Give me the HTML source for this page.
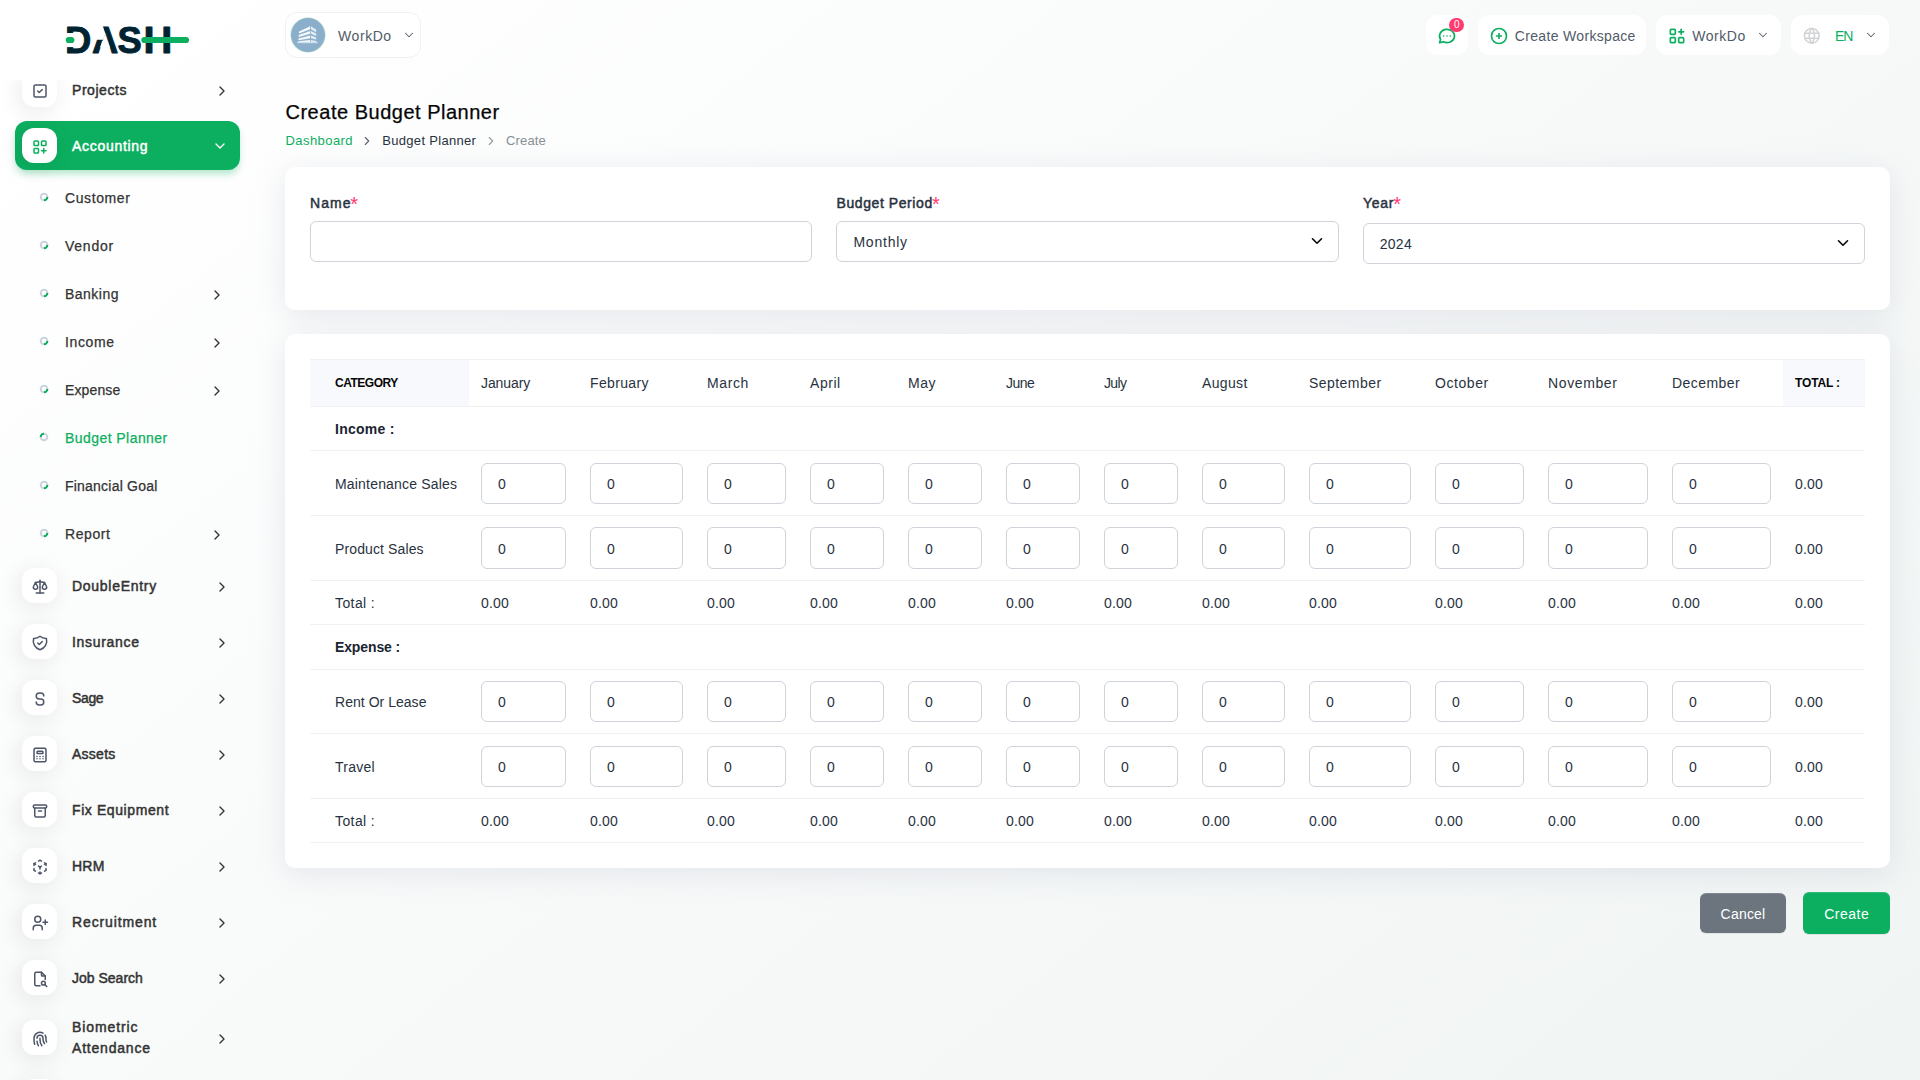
<!DOCTYPE html>
<html lang="en"><head><meta charset="utf-8"><meta name="viewport" content="width=1920"><title>Create Budget Planner</title>
<style>
*{box-sizing:border-box;margin:0;padding:0}
html,body{width:1920px;height:1080px;overflow:hidden}
body{position:relative;font-family:"Liberation Sans",sans-serif;font-size:14px;color:#293240;background:#fff linear-gradient(141.55deg,rgba(240,244,243,0) 3.46%,#f0f4f3 99.86%);}
.t{position:absolute;white-space:nowrap;display:block}
.abs{position:absolute}
svg.ic{position:absolute;display:block;overflow:visible}
/* sidebar */
#nav{position:absolute;left:0;top:80px;width:280px;height:1000px;overflow:hidden}
.mi{position:absolute;left:22px;width:35px;height:35px;border-radius:12px;background:#fff;box-shadow:-3px 4px 23px rgba(0,0,0,.09)}
.mi svg.ic{left:8.6px;top:9.6px}
.act{position:absolute;left:15px;top:41px;width:225px;height:49px;border-radius:12px;background:#0caf60;box-shadow:0 5px 7px -1px rgba(12,175,96,.3)}
.dot{position:absolute;left:39px;width:10px;height:10px}
/* header */
.hb{position:absolute;top:15px;height:40px;border-radius:12px;background:#fff}
/* cards */
.card{position:absolute;left:285px;width:1605px;background:#fff;border-radius:10px;box-shadow:0 6px 30px rgba(182,186,203,.3)}
.inp{position:absolute;height:41px;border:1px solid #ced4da;border-radius:6px;background:#fff}
.btn{position:absolute;border-radius:6px;box-shadow:inset 0 1px 0 rgba(255,255,255,.15),0 1px 1px rgba(0,0,0,.075)}
/* table */
table{position:absolute;left:25px;top:25px;width:1555px;border-collapse:collapse;table-layout:fixed}
th,td{text-align:left;vertical-align:middle;padding:0 12px;border-bottom:1px solid #f1f1f1;font-size:14px;font-weight:400;color:#293240;white-space:nowrap;position:relative}
thead th{height:47px;border-top:1px solid #f1f1f1}
th.hd{background:#f8f9fd;font-size:12px;font-weight:700;color:#060606;text-transform:uppercase}
td:first-child,th:first-child{padding-left:25px}
tr.sec td{font-weight:700;color:#1b2431}
tr.row td{vertical-align:top}
.rl{display:block;position:relative;top:1px}
tr.tot td{height:44px}
.ci{display:block;height:41px;width:100%;border:1px solid #ced4da;border-radius:6px;background:#fff;padding:0 0 0 16px;font-size:14px;color:#293240}

</style></head>
<body>
<div class="abs" id="logo" style="left:60px;top:20px;width:140px;height:40px"><svg width="140" height="40" viewBox="60 20 140 40" style="position:absolute;left:0;top:0;overflow:visible"><text y="52.6" font-family="Liberation Sans, sans-serif" font-weight="700" font-size="36.4" fill="#002332" stroke="#002332" stroke-width="0.9" stroke-linejoin="round"><tspan x="64.9">D</tspan><tspan x="92">A</tspan><tspan x="117.6">S</tspan><tspan x="143.6" textLength="28.8" lengthAdjust="spacingAndGlyphs">H</tspan></text><rect x="60" y="33" width="14.3" height="14.1" fill="#fff"/><path d="M95 26h7.85l2.5 7.8l-2.15 6h-8.2z" fill="#fff"/><path d="M102.1 41h5.9l2.1 6.5h-10.1z" fill="#fff"/><rect x="65.7" y="36.9" width="8.7" height="6.2" rx="3.1" fill="#0caf60"/><rect x="141.3" y="36.9" width="47.8" height="6.2" rx="3.1" fill="#0caf60"/></svg></div>
<div id="nav">
<div class="mi" style="top:-8.0px"><svg class="ic" width="18" height="18" viewBox="0 0 24 24" fill="none" stroke="#4d5567" stroke-width="2" stroke-linecap="round" stroke-linejoin="round" style=""><rect x="4" y="4" width="16" height="16" rx="2"/><path d="M9 12l2 2l4 -4"/></svg></div><span class="t" style="left:72px;top:0.05px;font-size:14px;font-weight:400;color:#333333;line-height:20px;letter-spacing:0.556px;-webkit-text-stroke:0.48px;">Projects</span><svg class="ic" width="16" height="16" viewBox="0 0 24 24" fill="none" stroke="#333333" stroke-width="2" stroke-linecap="round" stroke-linejoin="round" style="left:213.5px;top:3.0px"><polyline points="9 18 15 12 9 6"/></svg>
<div class="act" style="top:41.0px"></div><div class="mi" style="top:48.0px"><svg class="ic" width="18" height="18" viewBox="0 0 24 24" fill="none" stroke="#0caf60" stroke-width="2" stroke-linecap="round" stroke-linejoin="round" style=""><rect x="4" y="4" width="6" height="6" rx="1"/><rect x="14" y="4" width="6" height="6" rx="1"/><rect x="4" y="14" width="6" height="6" rx="1"/><path d="M14 17h6m-3 -3v6"/></svg></div><span class="t" style="left:72px;top:56.05px;font-size:14px;font-weight:400;color:#fff;line-height:20px;letter-spacing:0.701px;-webkit-text-stroke:0.48px;">Accounting</span><svg class="ic" width="16" height="16" viewBox="0 0 24 24" fill="none" stroke="#fff" stroke-width="2" stroke-linecap="round" stroke-linejoin="round" style="left:212px;top:57.5px"><polyline points="6 9 12 15 18 9"/></svg>
<svg class="dot" style="top:111.9px" viewBox="0 0 10 10"><circle cx="5" cy="5" r="3.3" fill="none" stroke="#cdd3dd" stroke-width="2"/><path d="M8.3 5a3.3 3.3 0 0 1 -3.3 3.3" fill="none" stroke="#0caf60" stroke-width="2"/></svg><span class="t" style="left:65px;top:108.45px;font-size:14px;font-weight:400;color:#333333;line-height:20px;letter-spacing:0.600px;-webkit-text-stroke:0.25px;">Customer</span>
<svg class="dot" style="top:159.9px" viewBox="0 0 10 10"><circle cx="5" cy="5" r="3.3" fill="none" stroke="#cdd3dd" stroke-width="2"/><path d="M8.3 5a3.3 3.3 0 0 1 -3.3 3.3" fill="none" stroke="#0caf60" stroke-width="2"/></svg><span class="t" style="left:65px;top:156.45px;font-size:14px;font-weight:400;color:#333333;line-height:20px;letter-spacing:0.747px;-webkit-text-stroke:0.25px;">Vendor</span>
<svg class="dot" style="top:207.9px" viewBox="0 0 10 10"><circle cx="5" cy="5" r="3.3" fill="none" stroke="#cdd3dd" stroke-width="2"/><path d="M8.3 5a3.3 3.3 0 0 1 -3.3 3.3" fill="none" stroke="#0caf60" stroke-width="2"/></svg><span class="t" style="left:65px;top:204.45px;font-size:14px;font-weight:400;color:#333333;line-height:20px;letter-spacing:0.473px;-webkit-text-stroke:0.25px;">Banking</span><svg class="ic" width="16" height="16" viewBox="0 0 24 24" fill="none" stroke="#333333" stroke-width="2" stroke-linecap="round" stroke-linejoin="round" style="left:209px;top:206.8px"><polyline points="9 18 15 12 9 6"/></svg>
<svg class="dot" style="top:255.9px" viewBox="0 0 10 10"><circle cx="5" cy="5" r="3.3" fill="none" stroke="#cdd3dd" stroke-width="2"/><path d="M8.3 5a3.3 3.3 0 0 1 -3.3 3.3" fill="none" stroke="#0caf60" stroke-width="2"/></svg><span class="t" style="left:65px;top:252.45px;font-size:14px;font-weight:400;color:#333333;line-height:20px;letter-spacing:0.637px;-webkit-text-stroke:0.25px;">Income</span><svg class="ic" width="16" height="16" viewBox="0 0 24 24" fill="none" stroke="#333333" stroke-width="2" stroke-linecap="round" stroke-linejoin="round" style="left:209px;top:254.8px"><polyline points="9 18 15 12 9 6"/></svg>
<svg class="dot" style="top:303.9px" viewBox="0 0 10 10"><circle cx="5" cy="5" r="3.3" fill="none" stroke="#cdd3dd" stroke-width="2"/><path d="M8.3 5a3.3 3.3 0 0 1 -3.3 3.3" fill="none" stroke="#0caf60" stroke-width="2"/></svg><span class="t" style="left:65px;top:300.45px;font-size:14px;font-weight:400;color:#333333;line-height:20px;letter-spacing:0.124px;-webkit-text-stroke:0.25px;">Expense</span><svg class="ic" width="16" height="16" viewBox="0 0 24 24" fill="none" stroke="#333333" stroke-width="2" stroke-linecap="round" stroke-linejoin="round" style="left:209px;top:302.8px"><polyline points="9 18 15 12 9 6"/></svg>
<svg class="dot" style="top:351.9px" viewBox="0 0 10 10"><circle cx="5" cy="5" r="3.3" fill="none" stroke="#cdd3dd" stroke-width="2"/><path d="M1.7 5a3.3 3.3 0 0 1 3.3 -3.3" fill="none" stroke="#0caf60" stroke-width="2"/></svg><span class="t" style="left:65px;top:348.45px;font-size:14px;font-weight:400;color:#0caf60;line-height:20px;letter-spacing:0.438px;-webkit-text-stroke:0.25px;">Budget Planner</span>
<svg class="dot" style="top:399.9px" viewBox="0 0 10 10"><circle cx="5" cy="5" r="3.3" fill="none" stroke="#cdd3dd" stroke-width="2"/><path d="M8.3 5a3.3 3.3 0 0 1 -3.3 3.3" fill="none" stroke="#0caf60" stroke-width="2"/></svg><span class="t" style="left:65px;top:396.45px;font-size:14px;font-weight:400;color:#333333;line-height:20px;letter-spacing:0.216px;-webkit-text-stroke:0.25px;">Financial Goal</span>
<svg class="dot" style="top:447.9px" viewBox="0 0 10 10"><circle cx="5" cy="5" r="3.3" fill="none" stroke="#cdd3dd" stroke-width="2"/><path d="M8.3 5a3.3 3.3 0 0 1 -3.3 3.3" fill="none" stroke="#0caf60" stroke-width="2"/></svg><span class="t" style="left:65px;top:444.45px;font-size:14px;font-weight:400;color:#333333;line-height:20px;letter-spacing:0.567px;-webkit-text-stroke:0.25px;">Report</span><svg class="ic" width="16" height="16" viewBox="0 0 24 24" fill="none" stroke="#333333" stroke-width="2" stroke-linecap="round" stroke-linejoin="round" style="left:209px;top:446.8px"><polyline points="9 18 15 12 9 6"/></svg>
<div class="mi" style="top:488.0px"><svg class="ic" width="18" height="18" viewBox="0 0 24 24" fill="none" stroke="#4d5567" stroke-width="2" stroke-linecap="round" stroke-linejoin="round" style=""><path d="M7 20h10"/><path d="M6 6l6 -1l6 1"/><path d="M12 3v17"/><path d="M9 12l-3 -6l-3 6a3 3 0 0 0 6 0"/><path d="M21 12l-3 -6l-3 6a3 3 0 0 0 6 0"/></svg></div><span class="t" style="left:72px;top:496.05px;font-size:14px;font-weight:400;color:#333333;line-height:20px;letter-spacing:0.713px;-webkit-text-stroke:0.48px;">DoubleEntry</span><svg class="ic" width="16" height="16" viewBox="0 0 24 24" fill="none" stroke="#333333" stroke-width="2" stroke-linecap="round" stroke-linejoin="round" style="left:213.5px;top:499.0px"><polyline points="9 18 15 12 9 6"/></svg>
<div class="mi" style="top:544.0px"><svg class="ic" width="18" height="18" viewBox="0 0 24 24" fill="none" stroke="#4d5567" stroke-width="2" stroke-linecap="round" stroke-linejoin="round" style=""><path d="M9 12l2 2l4 -4"/><path d="M12 3a12 12 0 0 0 8.5 3a12 12 0 0 1 -8.5 15a12 12 0 0 1 -8.5 -15a12 12 0 0 0 8.5 -3"/></svg></div><span class="t" style="left:72px;top:552.05px;font-size:14px;font-weight:400;color:#333333;line-height:20px;letter-spacing:0.684px;-webkit-text-stroke:0.48px;">Insurance</span><svg class="ic" width="16" height="16" viewBox="0 0 24 24" fill="none" stroke="#333333" stroke-width="2" stroke-linecap="round" stroke-linejoin="round" style="left:213.5px;top:555.0px"><polyline points="9 18 15 12 9 6"/></svg>
<div class="mi" style="top:600.0px"><svg class="ic" width="18" height="18" viewBox="0 0 24 24" fill="none" stroke="#4d5567" stroke-width="2" stroke-linecap="round" stroke-linejoin="round" style=""><path d="M17 8a4 4 0 0 0 -4 -4h-2a4 4 0 0 0 0 8h2a4 4 0 0 1 0 8h-2a4 4 0 0 1 -4 -4"/></svg></div><span class="t" style="left:72px;top:608.05px;font-size:14px;font-weight:400;color:#333333;line-height:20px;letter-spacing:-0.349px;-webkit-text-stroke:0.48px;">Sage</span><svg class="ic" width="16" height="16" viewBox="0 0 24 24" fill="none" stroke="#333333" stroke-width="2" stroke-linecap="round" stroke-linejoin="round" style="left:213.5px;top:611.0px"><polyline points="9 18 15 12 9 6"/></svg>
<div class="mi" style="top:656.0px"><svg class="ic" width="18" height="18" viewBox="0 0 24 24" fill="none" stroke="#4d5567" stroke-width="2" stroke-linecap="round" stroke-linejoin="round" style=""><rect x="4" y="3" width="16" height="18" rx="2"/><rect x="8" y="7" width="8" height="3" rx="1"/><path d="M8 14v.01M12 14v.01M16 14v.01M8 17v.01M12 17v.01M16 17v.01"/></svg></div><span class="t" style="left:72px;top:664.05px;font-size:14px;font-weight:400;color:#333333;line-height:20px;letter-spacing:0.259px;-webkit-text-stroke:0.48px;">Assets</span><svg class="ic" width="16" height="16" viewBox="0 0 24 24" fill="none" stroke="#333333" stroke-width="2" stroke-linecap="round" stroke-linejoin="round" style="left:213.5px;top:667.0px"><polyline points="9 18 15 12 9 6"/></svg>
<div class="mi" style="top:712.0px"><svg class="ic" width="18" height="18" viewBox="0 0 24 24" fill="none" stroke="#4d5567" stroke-width="2" stroke-linecap="round" stroke-linejoin="round" style=""><rect x="3" y="4" width="18" height="4" rx="2"/><path d="M5 8v10a2 2 0 0 0 2 2h10a2 2 0 0 0 2 -2v-10"/><path d="M10 12h4"/></svg></div><span class="t" style="left:72px;top:720.05px;font-size:14px;font-weight:400;color:#333333;line-height:20px;letter-spacing:0.594px;-webkit-text-stroke:0.48px;">Fix Equipment</span><svg class="ic" width="16" height="16" viewBox="0 0 24 24" fill="none" stroke="#333333" stroke-width="2" stroke-linecap="round" stroke-linejoin="round" style="left:213.5px;top:723.0px"><polyline points="9 18 15 12 9 6"/></svg>
<div class="mi" style="top:768.0px"><svg class="ic" width="18" height="18" viewBox="0 0 24 24" fill="none" stroke="#4d5567" stroke-width="2" stroke-linecap="round" stroke-linejoin="round" style=""><path d="M6 17.6l-2 -1.1v-2.5"/><path d="M4 10v-2.5l2 -1.1"/><path d="M10 4.1l2 -1.1l2 1.1"/><path d="M18 6.4l2 1.1v2.5"/><path d="M20 14v2.5l-2 1.12"/><path d="M14 19.9l-2 1.1l-2 -1.1"/><path d="M12 12l2 -1.1"/><path d="M18 8.6l2 -1.1"/><path d="M12 12v2.5"/><path d="M12 18.5v2.5"/><path d="M12 12l-2 -1.12"/><path d="M6 8.6l-2 -1.1"/></svg></div><span class="t" style="left:72px;top:776.05px;font-size:14px;font-weight:400;color:#333333;line-height:20px;letter-spacing:0.242px;-webkit-text-stroke:0.48px;">HRM</span><svg class="ic" width="16" height="16" viewBox="0 0 24 24" fill="none" stroke="#333333" stroke-width="2" stroke-linecap="round" stroke-linejoin="round" style="left:213.5px;top:779.0px"><polyline points="9 18 15 12 9 6"/></svg>
<div class="mi" style="top:824.0px"><svg class="ic" width="18" height="18" viewBox="0 0 24 24" fill="none" stroke="#4d5567" stroke-width="2" stroke-linecap="round" stroke-linejoin="round" style=""><circle cx="9" cy="7" r="4"/><path d="M3 21v-2a4 4 0 0 1 4 -4h4a4 4 0 0 1 4 4v2"/><path d="M16 11h6m-3 -3v6"/></svg></div><span class="t" style="left:72px;top:832.05px;font-size:14px;font-weight:400;color:#333333;line-height:20px;letter-spacing:0.873px;-webkit-text-stroke:0.48px;">Recruitment</span><svg class="ic" width="16" height="16" viewBox="0 0 24 24" fill="none" stroke="#333333" stroke-width="2" stroke-linecap="round" stroke-linejoin="round" style="left:213.5px;top:835.0px"><polyline points="9 18 15 12 9 6"/></svg>
<div class="mi" style="top:880.0px"><svg class="ic" width="18" height="18" viewBox="0 0 24 24" fill="none" stroke="#4d5567" stroke-width="2" stroke-linecap="round" stroke-linejoin="round" style=""><path d="M14 3v4a1 1 0 0 0 1 1h4"/><path d="M12 21h-5a2 2 0 0 1 -2 -2v-14a2 2 0 0 1 2 -2h7l5 5v4.5"/><circle cx="16.5" cy="17.5" r="2.5"/><path d="M18.5 19.5l2.5 2.5"/></svg></div><span class="t" style="left:72px;top:888.05px;font-size:14px;font-weight:400;color:#333333;line-height:20px;letter-spacing:0.005px;-webkit-text-stroke:0.48px;">Job Search</span><svg class="ic" width="16" height="16" viewBox="0 0 24 24" fill="none" stroke="#333333" stroke-width="2" stroke-linecap="round" stroke-linejoin="round" style="left:213.5px;top:891.0px"><polyline points="9 18 15 12 9 6"/></svg>
<div class="mi" style="top:940.0px"><svg class="ic" width="18" height="18" viewBox="0 0 24 24" fill="none" stroke="#4d5567" stroke-width="2" stroke-linecap="round" stroke-linejoin="round" style=""><path d="M18.9 7a8 8 0 0 1 1.1 5v1a6 6 0 0 0 .8 3"/><path d="M8 11a4 4 0 0 1 8 0v1a10 10 0 0 0 2 6"/><path d="M12 11v2a14 14 0 0 0 2.5 8"/><path d="M8 15a18 18 0 0 0 1.8 6"/><path d="M4.9 19a22 22 0 0 1 -.9 -7v-1a8 8 0 0 1 12 -6.95"/></svg></div><span class="t" style="left:72px;top:937.05px;font-size:14px;font-weight:400;color:#333333;line-height:20px;letter-spacing:0.898px;-webkit-text-stroke:0.48px;">Biometric</span><span class="t" style="left:72px;top:957.95px;font-size:14px;font-weight:400;color:#333333;line-height:20px;letter-spacing:0.800px;-webkit-text-stroke:0.48px;">Attendance</span><svg class="ic" width="16" height="16" viewBox="0 0 24 24" fill="none" stroke="#333333" stroke-width="2" stroke-linecap="round" stroke-linejoin="round" style="left:213.5px;top:951.0px"><polyline points="9 18 15 12 9 6"/></svg>
<div class="mi" style="top:999.0px"></div>
</div><div class="abs" style="left:285px;top:12px;width:136px;height:46px;border:1px solid #f1f1f1;border-radius:12px;background:#fff"></div>
<div class="abs" style="left:291px;top:18px;width:34px;height:34px;border-radius:50%;background:#8bafcb;box-shadow:0 0 0 .7px #cdeedb"></div>
<svg class="ic" style="left:290px;top:17px" width="36" height="36" viewBox="290 17 36 36"><g fill="#f4f8fb"><path d="M299 31.5L310.2 26.3V29.2L299 33.6z"/><path d="M298.7 35L310.2 31V33.7L298.7 37.1z"/><path d="M298.5 38.4L310.2 35.5V38.2L298.5 40.3z"/><path d="M298.3 41.3L310.2 39.9V42L298.3 42.3z"/></g><g fill="#e3edf5"><path d="M311 26.4L316.2 29.5V32.2L311 29.3z"/><path d="M311 31L316.2 33.6V36L311 33.7z"/><path d="M311 35.5L316.2 37.4V39.6L311 38.2z"/><path d="M311 39.9L316.2 41V42.3L311 42z"/></g><rect x="297.2" y="41.9" width="20.4" height="1.3" fill="#cfdfeb"/></svg>
<span class="t" style="left:338.1px;top:25.85px;font-size:14px;font-weight:400;color:#525b69;line-height:20px;letter-spacing:0.541px;">WorkDo</span>
<svg class="ic" width="14" height="14" viewBox="0 0 24 24" fill="none" stroke="#5b6270" stroke-width="1.8" stroke-linecap="round" stroke-linejoin="round" style="left:401.9px;top:27.7px"><polyline points="6 9 12 15 18 9"/></svg>
<div class="hb" style="left:1426px;width:42px"></div>
<svg class="ic" width="20" height="20" viewBox="0 0 24 24" fill="none" stroke="#0caf60" stroke-width="2" stroke-linecap="round" stroke-linejoin="round" style="left:1437.2px;top:25.8px"><path d="M3 20l1.3 -3.9a9 8 0 1 1 3.4 2.9l-4.7 1"/><path d="M12 12v.01M8 12v.01M16 12v.01"/></svg>
<div class="abs" style="left:1449px;top:17.5px;width:15px;height:14.5px;border-radius:8px;background:#ff3a6e"></div>
<span class="t" style="left:1453.9px;top:18.54px;font-size:10px;font-weight:400;color:#fff;line-height:12px;letter-spacing:0.156px;">0</span>
<div class="hb" style="left:1478px;width:168px"></div>
<svg class="ic" width="20" height="20" viewBox="0 0 24 24" fill="none" stroke="#0caf60" stroke-width="2" stroke-linecap="round" stroke-linejoin="round" style="left:1489.3px;top:25.9px"><circle cx="12" cy="12" r="9"/><path d="M9 12h6"/><path d="M12 9v6"/></svg>
<span class="t" style="left:1514.8px;top:25.85px;font-size:14px;font-weight:400;color:#525b69;line-height:20px;letter-spacing:0.327px;">Create Workspace</span>
<div class="hb" style="left:1656px;width:125px"></div>
<svg class="ic" width="20" height="20" viewBox="0 0 24 24" fill="none" stroke="#0caf60" stroke-width="2" stroke-linecap="round" stroke-linejoin="round" style="left:1667.2px;top:25.9px"><rect x="4" y="4" width="6" height="6" rx="1"/><rect x="4" y="14" width="6" height="6" rx="1"/><rect x="14" y="14" width="6" height="6" rx="1"/><path d="M14 7h6"/><path d="M17 4v6"/></svg>
<span class="t" style="left:1692.2px;top:25.85px;font-size:14px;font-weight:400;color:#525b69;line-height:20px;letter-spacing:0.541px;">WorkDo</span>
<svg class="ic" width="14" height="14" viewBox="0 0 24 24" fill="none" stroke="#5b6270" stroke-width="1.8" stroke-linecap="round" stroke-linejoin="round" style="left:1756px;top:27.9px"><polyline points="6 9 12 15 18 9"/></svg>
<div class="hb" style="left:1791px;width:98px"></div>
<svg class="ic" width="19.6" height="19.6" viewBox="0 0 24 24" fill="none" stroke="#d2d4d7" stroke-width="1.9" stroke-linecap="round" stroke-linejoin="round" style="left:1802.4px;top:25.9px"><circle cx="12" cy="12" r="9"/><path d="M3.6 9h16.8"/><path d="M3.6 15h16.8"/><path d="M11.5 3a17 17 0 0 0 0 18"/><path d="M12.5 3a17 17 0 0 1 0 18"/></svg>
<span class="t" style="left:1835px;top:25.85px;font-size:14px;font-weight:400;color:#0caf60;line-height:20px;letter-spacing:-1.125px;">EN</span>
<svg class="ic" width="14" height="14" viewBox="0 0 24 24" fill="none" stroke="#5b6270" stroke-width="1.8" stroke-linecap="round" stroke-linejoin="round" style="left:1863.8px;top:27.9px"><polyline points="6 9 12 15 18 9"/></svg><span class="t" style="left:285.5px;top:98.57px;font-size:20px;font-weight:400;color:#060606;line-height:26px;letter-spacing:0.509px;-webkit-text-stroke:0.25px;">Create Budget Planner</span>
<span class="t" style="left:285.5px;top:130.60px;font-size:13px;font-weight:400;color:#0caf60;line-height:20px;letter-spacing:0.436px;">Dashboard</span>
<svg class="ic" width="14" height="14" viewBox="0 0 24 24" fill="none" stroke="#5d646c" stroke-width="1.9" stroke-linecap="round" stroke-linejoin="round" style="left:360.4px;top:133.5px"><polyline points="9 18 15 12 9 6"/></svg>
<span class="t" style="left:382.3px;top:130.60px;font-size:13px;font-weight:400;color:#293240;line-height:20px;letter-spacing:0.304px;">Budget Planner</span>
<svg class="ic" width="14" height="14" viewBox="0 0 24 24" fill="none" stroke="#959ba2" stroke-width="1.9" stroke-linecap="round" stroke-linejoin="round" style="left:484.2px;top:133.5px"><polyline points="9 18 15 12 9 6"/></svg>
<span class="t" style="left:505.9px;top:130.60px;font-size:13px;font-weight:400;color:#868e96;line-height:20px;letter-spacing:0.188px;">Create</span>
<div class="card" style="top:167px;height:143px"></div>
<span class="t" style="left:310px;top:193.45px;font-size:14px;font-weight:400;color:#293240;line-height:20px;letter-spacing:1.052px;-webkit-text-stroke:0.48px;">Name</span>
<span class="t" style="left:350.3px;top:192.47px;font-size:20px;font-weight:400;color:#ff3a6e;line-height:24px;letter-spacing:3.219px;">*</span>
<span class="t" style="left:836.5px;top:193.45px;font-size:14px;font-weight:400;color:#293240;line-height:20px;letter-spacing:0.582px;-webkit-text-stroke:0.48px;">Budget Period</span>
<span class="t" style="left:931.9px;top:192.47px;font-size:20px;font-weight:400;color:#ff3a6e;line-height:24px;letter-spacing:3.219px;">*</span>
<span class="t" style="left:1363px;top:193.45px;font-size:14px;font-weight:400;color:#293240;line-height:20px;letter-spacing:0.740px;-webkit-text-stroke:0.48px;">Year</span>
<span class="t" style="left:1393.3px;top:192.47px;font-size:20px;font-weight:400;color:#ff3a6e;line-height:24px;letter-spacing:3.219px;">*</span>
<div class="inp" style="left:310px;top:221px;width:502px"></div>
<div class="inp" style="left:836px;top:221px;width:503px"></div>
<div class="inp" style="left:1363px;top:223px;width:502px"></div>
<span class="t" style="left:853.4px;top:232.15px;font-size:14px;font-weight:400;color:#293240;line-height:20px;letter-spacing:0.784px;">Monthly</span>
<span class="t" style="left:1379.7px;top:234.15px;font-size:14px;font-weight:400;color:#293240;line-height:20px;letter-spacing:0.292px;">2024</span>
<svg class="ic" style="left:1309px;top:235.2px" width="16" height="12" viewBox="0 0 16 16" preserveAspectRatio="xMidYMid meet"><path fill="none" stroke="#05070a" stroke-linecap="round" stroke-linejoin="round" stroke-width="2.15" d="M2 5l6 6 6-6"/></svg>
<svg class="ic" style="left:1835px;top:237.2px" width="16" height="12" viewBox="0 0 16 16" preserveAspectRatio="xMidYMid meet"><path fill="none" stroke="#05070a" stroke-linecap="round" stroke-linejoin="round" stroke-width="2.15" d="M2 5l6 6 6-6"/></svg>
<div class="card" style="top:334px;height:534px">
<table><colgroup><col style="width:159px"><col style="width:109px"><col style="width:117px"><col style="width:103px"><col style="width:98px"><col style="width:98px"><col style="width:98px"><col style="width:98px"><col style="width:107px"><col style="width:126px"><col style="width:113px"><col style="width:124px"><col style="width:123px"><col style="width:82px"></colgroup>
<thead><tr><th class="hd"><span style="letter-spacing:-0.489px">CATEGORY</span></th>
<th><span style="letter-spacing:-0.096px">January</span></th>
<th><span style="letter-spacing:0.350px">February</span></th>
<th><span style="letter-spacing:0.621px">March</span></th>
<th><span style="letter-spacing:0.551px">April</span></th>
<th><span style="letter-spacing:0.469px">May</span></th>
<th><span style="letter-spacing:-0.521px">June</span></th>
<th><span style="letter-spacing:-0.667px">July</span></th>
<th><span style="letter-spacing:0.341px">August</span></th>
<th><span style="letter-spacing:0.449px">September</span></th>
<th><span style="letter-spacing:0.557px">October</span></th>
<th><span style="letter-spacing:0.621px">November</span></th>
<th><span style="letter-spacing:0.444px">December</span></th>
<th class="hd"><span style="letter-spacing:-0.159px">TOTAL :</span></th></tr></thead><tbody>
<tr class="sec"><td colspan="14" style="height:44px"><span style="letter-spacing:0.254px">Income :</span></td></tr>
<tr class="row"><td style="height:65px;padding-top:12px"><span class="rl" style="line-height:41px;letter-spacing:0.185px">Maintenance Sales</span></td><td style="height:65px;padding-top:12px"><div class="ci" style="height:41px;line-height:41px">0</div></td><td style="height:65px;padding-top:12px"><div class="ci" style="height:41px;line-height:41px">0</div></td><td style="height:65px;padding-top:12px"><div class="ci" style="height:41px;line-height:41px">0</div></td><td style="height:65px;padding-top:12px"><div class="ci" style="height:41px;line-height:41px">0</div></td><td style="height:65px;padding-top:12px"><div class="ci" style="height:41px;line-height:41px">0</div></td><td style="height:65px;padding-top:12px"><div class="ci" style="height:41px;line-height:41px">0</div></td><td style="height:65px;padding-top:12px"><div class="ci" style="height:41px;line-height:41px">0</div></td><td style="height:65px;padding-top:12px"><div class="ci" style="height:41px;line-height:41px">0</div></td><td style="height:65px;padding-top:12px"><div class="ci" style="height:41px;line-height:41px">0</div></td><td style="height:65px;padding-top:12px"><div class="ci" style="height:41px;line-height:41px">0</div></td><td style="height:65px;padding-top:12px"><div class="ci" style="height:41px;line-height:41px">0</div></td><td style="height:65px;padding-top:12px"><div class="ci" style="height:41px;line-height:41px">0</div></td><td style="height:65px;padding-top:12px"><span class="rl" style="line-height:41px;letter-spacing:0.151px">0.00</span></td></tr>
<tr class="row"><td style="height:65px;padding-top:11px"><span class="rl" style="line-height:42px;letter-spacing:0.117px">Product Sales</span></td><td style="height:65px;padding-top:11px"><div class="ci" style="height:42px;line-height:42px">0</div></td><td style="height:65px;padding-top:11px"><div class="ci" style="height:42px;line-height:42px">0</div></td><td style="height:65px;padding-top:11px"><div class="ci" style="height:42px;line-height:42px">0</div></td><td style="height:65px;padding-top:11px"><div class="ci" style="height:42px;line-height:42px">0</div></td><td style="height:65px;padding-top:11px"><div class="ci" style="height:42px;line-height:42px">0</div></td><td style="height:65px;padding-top:11px"><div class="ci" style="height:42px;line-height:42px">0</div></td><td style="height:65px;padding-top:11px"><div class="ci" style="height:42px;line-height:42px">0</div></td><td style="height:65px;padding-top:11px"><div class="ci" style="height:42px;line-height:42px">0</div></td><td style="height:65px;padding-top:11px"><div class="ci" style="height:42px;line-height:42px">0</div></td><td style="height:65px;padding-top:11px"><div class="ci" style="height:42px;line-height:42px">0</div></td><td style="height:65px;padding-top:11px"><div class="ci" style="height:42px;line-height:42px">0</div></td><td style="height:65px;padding-top:11px"><div class="ci" style="height:42px;line-height:42px">0</div></td><td style="height:65px;padding-top:11px"><span class="rl" style="line-height:42px;letter-spacing:0.151px">0.00</span></td></tr>
<tr class="tot"><td><span style="letter-spacing:0.401px">Total :</span></td><td><span style="letter-spacing:0.151px">0.00</span></td><td><span style="letter-spacing:0.151px">0.00</span></td><td><span style="letter-spacing:0.151px">0.00</span></td><td><span style="letter-spacing:0.151px">0.00</span></td><td><span style="letter-spacing:0.151px">0.00</span></td><td><span style="letter-spacing:0.151px">0.00</span></td><td><span style="letter-spacing:0.151px">0.00</span></td><td><span style="letter-spacing:0.151px">0.00</span></td><td><span style="letter-spacing:0.151px">0.00</span></td><td><span style="letter-spacing:0.151px">0.00</span></td><td><span style="letter-spacing:0.151px">0.00</span></td><td><span style="letter-spacing:0.151px">0.00</span></td><td><span style="letter-spacing:0.151px">0.00</span></td></tr>
<tr class="sec"><td colspan="14" style="height:45px"><span style="letter-spacing:-0.125px">Expense :</span></td></tr>
<tr class="row"><td style="height:64px;padding-top:11px"><span class="rl" style="line-height:41px;letter-spacing:0.033px">Rent Or Lease</span></td><td style="height:64px;padding-top:11px"><div class="ci" style="height:41px;line-height:41px">0</div></td><td style="height:64px;padding-top:11px"><div class="ci" style="height:41px;line-height:41px">0</div></td><td style="height:64px;padding-top:11px"><div class="ci" style="height:41px;line-height:41px">0</div></td><td style="height:64px;padding-top:11px"><div class="ci" style="height:41px;line-height:41px">0</div></td><td style="height:64px;padding-top:11px"><div class="ci" style="height:41px;line-height:41px">0</div></td><td style="height:64px;padding-top:11px"><div class="ci" style="height:41px;line-height:41px">0</div></td><td style="height:64px;padding-top:11px"><div class="ci" style="height:41px;line-height:41px">0</div></td><td style="height:64px;padding-top:11px"><div class="ci" style="height:41px;line-height:41px">0</div></td><td style="height:64px;padding-top:11px"><div class="ci" style="height:41px;line-height:41px">0</div></td><td style="height:64px;padding-top:11px"><div class="ci" style="height:41px;line-height:41px">0</div></td><td style="height:64px;padding-top:11px"><div class="ci" style="height:41px;line-height:41px">0</div></td><td style="height:64px;padding-top:11px"><div class="ci" style="height:41px;line-height:41px">0</div></td><td style="height:64px;padding-top:11px"><span class="rl" style="line-height:41px;letter-spacing:0.151px">0.00</span></td></tr>
<tr class="row"><td style="height:65px;padding-top:12px"><span class="rl" style="line-height:41px;letter-spacing:0.244px">Travel</span></td><td style="height:65px;padding-top:12px"><div class="ci" style="height:41px;line-height:41px">0</div></td><td style="height:65px;padding-top:12px"><div class="ci" style="height:41px;line-height:41px">0</div></td><td style="height:65px;padding-top:12px"><div class="ci" style="height:41px;line-height:41px">0</div></td><td style="height:65px;padding-top:12px"><div class="ci" style="height:41px;line-height:41px">0</div></td><td style="height:65px;padding-top:12px"><div class="ci" style="height:41px;line-height:41px">0</div></td><td style="height:65px;padding-top:12px"><div class="ci" style="height:41px;line-height:41px">0</div></td><td style="height:65px;padding-top:12px"><div class="ci" style="height:41px;line-height:41px">0</div></td><td style="height:65px;padding-top:12px"><div class="ci" style="height:41px;line-height:41px">0</div></td><td style="height:65px;padding-top:12px"><div class="ci" style="height:41px;line-height:41px">0</div></td><td style="height:65px;padding-top:12px"><div class="ci" style="height:41px;line-height:41px">0</div></td><td style="height:65px;padding-top:12px"><div class="ci" style="height:41px;line-height:41px">0</div></td><td style="height:65px;padding-top:12px"><div class="ci" style="height:41px;line-height:41px">0</div></td><td style="height:65px;padding-top:12px"><span class="rl" style="line-height:41px;letter-spacing:0.151px">0.00</span></td></tr>
<tr class="tot"><td><span style="letter-spacing:0.401px">Total :</span></td><td><span style="letter-spacing:0.151px">0.00</span></td><td><span style="letter-spacing:0.151px">0.00</span></td><td><span style="letter-spacing:0.151px">0.00</span></td><td><span style="letter-spacing:0.151px">0.00</span></td><td><span style="letter-spacing:0.151px">0.00</span></td><td><span style="letter-spacing:0.151px">0.00</span></td><td><span style="letter-spacing:0.151px">0.00</span></td><td><span style="letter-spacing:0.151px">0.00</span></td><td><span style="letter-spacing:0.151px">0.00</span></td><td><span style="letter-spacing:0.151px">0.00</span></td><td><span style="letter-spacing:0.151px">0.00</span></td><td><span style="letter-spacing:0.151px">0.00</span></td><td><span style="letter-spacing:0.151px">0.00</span></td></tr>
</tbody></table>
</div>
<div class="btn" style="left:1700px;top:893px;width:86px;height:40px;background:#6c757d"></div>
<div class="btn" style="left:1803px;top:892px;width:87px;height:42px;background:#0caf60"></div>
<span class="t" style="left:1720.6px;top:903.95px;font-size:14px;font-weight:400;color:#fff;line-height:20px;letter-spacing:0.201px;">Cancel</span>
<span class="t" style="left:1824.2px;top:903.95px;font-size:14.01px;font-weight:400;color:#fff;line-height:20px;letter-spacing:0.514px;">Create</span>
</body></html>
